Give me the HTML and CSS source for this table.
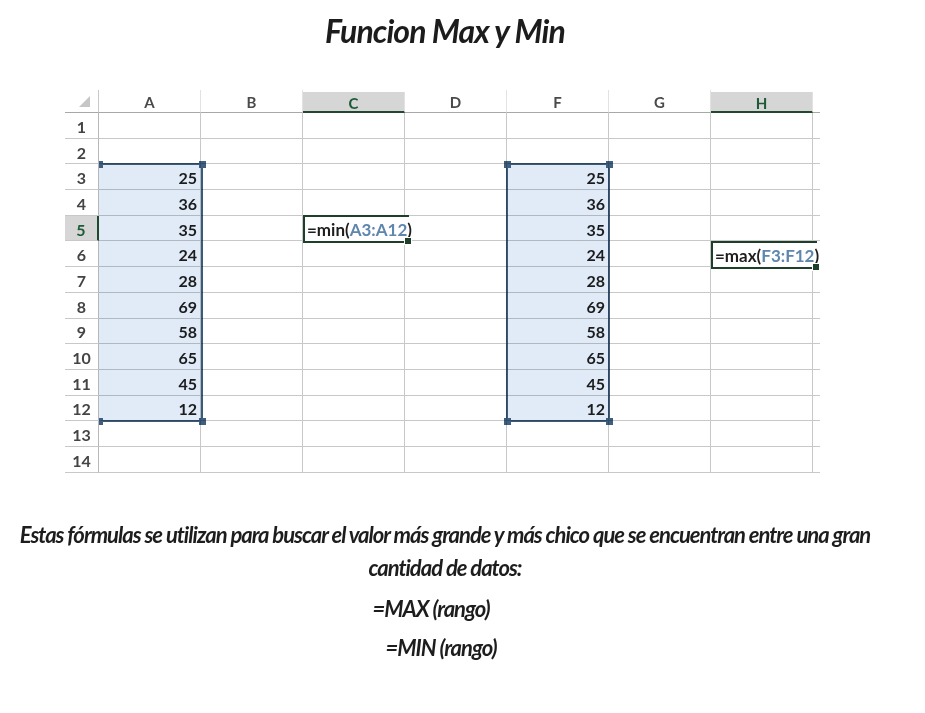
FILE: index.html
```html
<!DOCTYPE html>
<html lang="es">
<head>
<meta charset="utf-8">
<title>Funcion Max y Min</title>
<link rel="stylesheet" href="styles.css">
</head>
<body>
<main class="page">
  <h1 class="title">Funcion Max y Min</h1>

  <section class="sheet">
    <div class="grid">
      <div class="ch corner"><span class="tri"></span></div>
      <div class="ch">A</div><div class="ch">B</div><div class="ch sel">C</div><div class="ch">D</div><div class="ch">F</div><div class="ch">G</div><div class="ch sel">H</div><div class="ch tail"></div>

      <div class="rh">1</div><div class="c"></div><div class="c"></div><div class="c"></div><div class="c"></div><div class="c"></div><div class="c"></div><div class="c"></div><div class="c tail"></div>
      <div class="rh">2</div><div class="c"></div><div class="c"></div><div class="c"></div><div class="c"></div><div class="c"></div><div class="c"></div><div class="c"></div><div class="c tail"></div>
      <div class="rh">3</div><div class="c n">25</div><div class="c"></div><div class="c"></div><div class="c"></div><div class="c n">25</div><div class="c"></div><div class="c"></div><div class="c tail"></div>
      <div class="rh">4</div><div class="c n">36</div><div class="c"></div><div class="c"></div><div class="c"></div><div class="c n">36</div><div class="c"></div><div class="c"></div><div class="c tail"></div>
      <div class="rh sel">5</div><div class="c n">35</div><div class="c"></div><div class="c"></div><div class="c"></div><div class="c n">35</div><div class="c"></div><div class="c"></div><div class="c tail"></div>
      <div class="rh">6</div><div class="c n">24</div><div class="c"></div><div class="c"></div><div class="c"></div><div class="c n">24</div><div class="c"></div><div class="c"></div><div class="c tail"></div>
      <div class="rh">7</div><div class="c n">28</div><div class="c"></div><div class="c"></div><div class="c"></div><div class="c n">28</div><div class="c"></div><div class="c"></div><div class="c tail"></div>
      <div class="rh">8</div><div class="c n">69</div><div class="c"></div><div class="c"></div><div class="c"></div><div class="c n">69</div><div class="c"></div><div class="c"></div><div class="c tail"></div>
      <div class="rh">9</div><div class="c n">58</div><div class="c"></div><div class="c"></div><div class="c"></div><div class="c n">58</div><div class="c"></div><div class="c"></div><div class="c tail"></div>
      <div class="rh">10</div><div class="c n">65</div><div class="c"></div><div class="c"></div><div class="c"></div><div class="c n">65</div><div class="c"></div><div class="c"></div><div class="c tail"></div>
      <div class="rh">11</div><div class="c n">45</div><div class="c"></div><div class="c"></div><div class="c"></div><div class="c n">45</div><div class="c"></div><div class="c"></div><div class="c tail"></div>
      <div class="rh">12</div><div class="c n">12</div><div class="c"></div><div class="c"></div><div class="c"></div><div class="c n">12</div><div class="c"></div><div class="c"></div><div class="c tail"></div>
      <div class="rh">13</div><div class="c"></div><div class="c"></div><div class="c"></div><div class="c"></div><div class="c"></div><div class="c"></div><div class="c"></div><div class="c tail"></div>
      <div class="rh">14</div><div class="c"></div><div class="c"></div><div class="c"></div><div class="c"></div><div class="c"></div><div class="c"></div><div class="c"></div><div class="c tail"></div>
    </div>

    <div class="range range-a">
      <span class="h tl small"></span><span class="h tr"></span><span class="h bl small"></span><span class="h br"></span>
    </div>
    <div class="range range-f">
      <span class="h tl"></span><span class="h tr"></span><span class="h bl"></span><span class="h br"></span>
    </div>

    <div class="edit edit-c">=min(<span class="ref">A3:A12</span>)<span class="fill"></span></div>
    <div class="edit edit-h">=max(<span class="ref">F3:F12</span>)<span class="fill"></span></div>
  </section>

  <section class="notes">
    <p class="desc">Estas fórmulas se utilizan para buscar el valor más grande y más chico que se encuentran entre una gran<br>cantidad de datos:</p>
    <p class="formula f-max">=MAX (rango)</p>
    <p class="formula f-min">=MIN (rango)</p>
  </section>
</main>
</body>
</html>
```

FILE: styles.css
```css
html, body {
  margin: 0;
  padding: 0;
  background: #ffffff;
}

.page {
  width: 890px;
  display: flex;
  flex-direction: column;
  align-items: center;
  font-family: Lato, "Open Sans", sans-serif;
  color: #1d1d1d;
}

.title {
  margin: 12px 0 0 0;
  font-size: 32px;
  line-height: 38px;
  font-weight: 700;
  font-style: italic;
  letter-spacing: -0.9px;
  color: #1c1c1c;
}

/* ---------- spreadsheet ---------- */
.sheet {
  position: relative;
  align-self: flex-start;
  margin: 40px 0 0 65px;
  font-family: Lato, "Open Sans", sans-serif;
}

.grid {
  display: grid;
  grid-template-columns: 34px repeat(7, 102px) 7px;
  grid-template-rows: 23px repeat(14, 25.7px);
}

.ch {
  display: flex;
  align-items: center;
  justify-content: center;
  font-size: 15px;
  font-weight: 700;
  color: #4a4a4a;
  border-right: 1px solid #e2e2e2;
  border-bottom: 1px solid #a8a8a8;
  box-sizing: border-box;
  padding-top: 2px;
}

.ch.corner {
  justify-content: flex-end;
  align-items: flex-end;
  padding: 0 8px 5px 0;
  border-right: 1px solid #c9c9c9;
}

.tri {
  width: 0;
  height: 0;
  border-left: 11px solid transparent;
  border-bottom: 11px solid #c6c6c6;
}

.ch.sel {
  background: #d6d6d6;
  color: #1d5a37;
  border-bottom: 2px solid #1f4a30;
  margin-top: 2px;
}

.ch.tail {
  border-right: none;
}

.rh {
  display: flex;
  align-items: center;
  justify-content: center;
  font-size: 16px;
  font-weight: 700;
  color: #444444;
  border-right: 1px solid #b7b7b7;
  border-bottom: 1px solid #c8c8c8;
  box-sizing: border-box;
  padding-top: 2px;
}

.rh.sel {
  background: #d6d6d6;
  color: #1d5a37;
  border-right: 2px solid #1f4a30;
}

.c {
  border-right: 1px solid #c8c8c8;
  border-bottom: 1px solid #c8c8c8;
  box-sizing: border-box;
}

.c.tail {
  border-right: none;
}

.c.n {
  display: flex;
  align-items: center;
  justify-content: flex-end;
  padding: 2px 3px 0 0;
  font-size: 16px;
  font-weight: 700;
  color: #1e1e1e;
}

/* ---------- selection ranges (overlay) ---------- */
.range {
  position: absolute;
  box-sizing: border-box;
  background: #e1ebf8;
  mix-blend-mode: multiply;
  border: 2px solid #3b5b79;
  pointer-events: none;
}

.range-a {
  left: 34px;
  top: 73.4px;
  width: 104px;
  height: 259px;
  border-left: none;
}

.range-f {
  left: 441px;
  top: 73.4px;
  width: 104px;
  height: 259px;
}

.h {
  position: absolute;
  width: 7px;
  height: 7px;
  background: #3f5f82;
  box-sizing: border-box;
}

.h.small {
  width: 4px;
  height: 7px;
}

.h.tl { left: -4px; top: -4px; }
.h.tr { right: -5px; top: -4px; }
.h.bl { left: -4px; bottom: -5px; }
.h.br { right: -5px; bottom: -5px; }

.range-a .h.tl,
.range-a .h.bl { left: 0; }

/* ---------- formula editing cells (overlay) ---------- */
.edit {
  position: absolute;
  box-sizing: border-box;
  height: 28px;
  border: 2px solid #1e3f29;
  border-right: none;
  background: #ffffff;
  display: flex;
  align-items: center;
  padding: 2px 0 0 2px;
  font-size: 17px;
  font-weight: 700;
  color: #1e1e1e;
  white-space: nowrap;
  overflow: visible;
}

.edit .ref {
  color: #5f86ad;
}

.edit .fill {
  position: absolute;
  right: -3px;
  bottom: -4px;
  width: 6px;
  height: 6px;
  background: #1e3f29;
  border: 1px solid #ffffff;
}

.edit-c {
  left: 238px;
  top: 124.8px;
  width: 106px;
}

.edit-h {
  left: 646px;
  top: 150.5px;
  width: 106px;
}

/* ---------- notes ---------- */
.notes {
  margin-top: 45px;
  display: flex;
  flex-direction: column;
  align-items: center;
}

.desc {
  margin: 0;
  text-align: center;
  font-size: 22px;
  line-height: 33px;
  font-weight: 700;
  font-style: italic;
  letter-spacing: -1px;
  color: #1d1d1d;
}

.formula {
  margin: 0;
  font-size: 22px;
  line-height: 28px;
  font-weight: 700;
  font-style: italic;
  letter-spacing: -1px;
  color: #1d1d1d;
}

.f-max {
  margin-top: 11px;
  padding-right: 28px;
}

.f-min {
  margin-top: 11px;
  padding-right: 8px;
}
```
